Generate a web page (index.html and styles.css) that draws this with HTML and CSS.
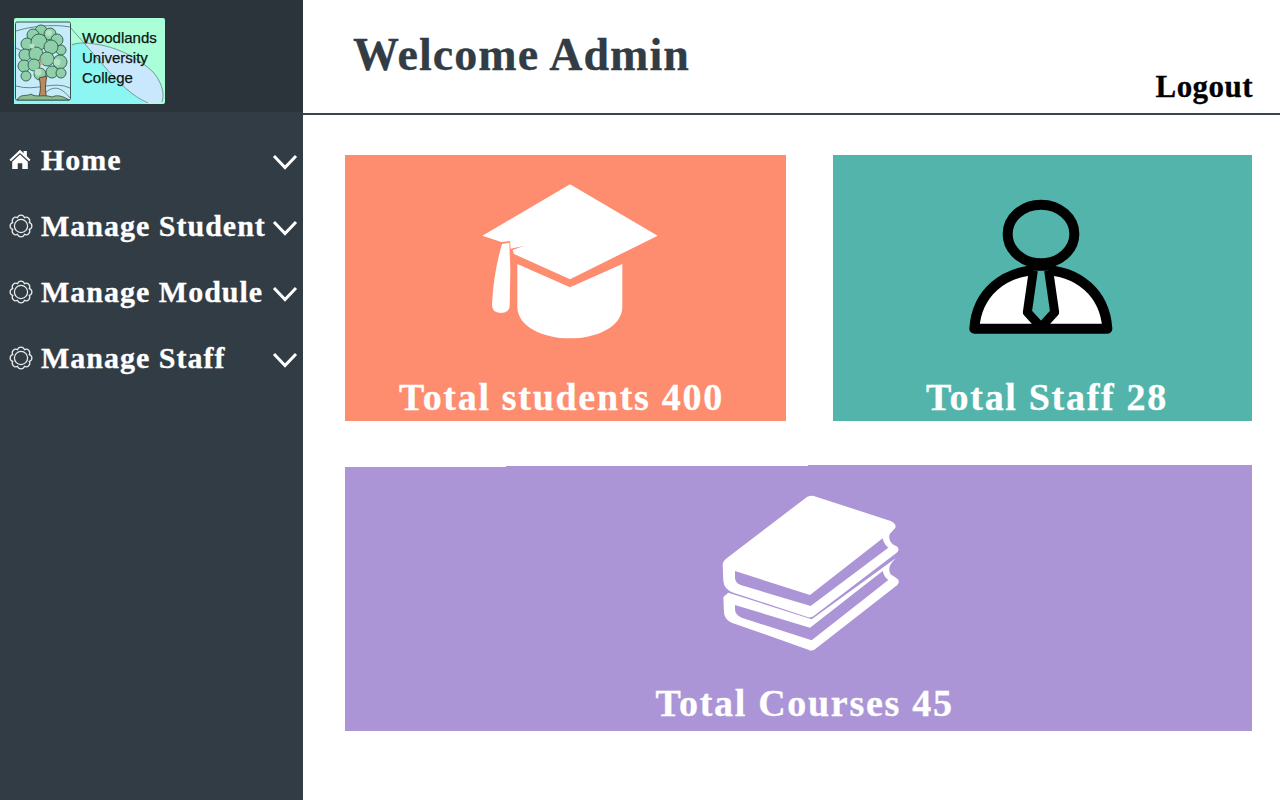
FILE: index.html
```html
<!DOCTYPE html>
<html lang="en">
<head>
<meta charset="utf-8">
<title>Woodlands University College</title>
<link rel="stylesheet" href="styles.css">
</head>
<body>
<svg class="defs" width="0" height="0" aria-hidden="true">
  <symbol id="gear" viewBox="2 2 20 20">
    <path d="M18.93 14.87A3 3 0 0 1 14.87 18.93A3 3 0 0 1 9.13 18.93A3 3 0 0 1 5.07 14.87A3 3 0 0 1 5.07 9.13A3 3 0 0 1 9.13 5.07A3 3 0 0 1 14.87 5.07A3 3 0 0 1 18.93 9.13A3 3 0 0 1 18.93 14.87Z" fill="none" stroke="currentColor" stroke-width="1.050"/>
    <circle cx="12" cy="12" r="5.500" fill="none" stroke="currentColor" stroke-width="1.050"/>
  </symbol>
  <symbol id="chev" viewBox="0 0 26 16">
    <polyline points="2,2 13,13.5 24,2" fill="none" stroke="currentColor" stroke-width="3"/>
  </symbol>
</svg>
<div class="app">
  <aside class="sidebar">
    <div class="brand">
      <svg class="logo" viewBox="0 0 151 86" role="img" aria-label="Woodlands University College">
        <rect x="0" y="0" width="151" height="86" rx="2" fill="#aaffd8"/>
        <path d="M0 25H70L105 65L132 86H0Z" fill="#8cf7f2"/>
        <path d="M70 25C100 26 125 40 140 55C150 68 150 78 148 84L134 85C118 78 105 65 90 48Z" fill="#c9e8fd"/>
        <path d="M56 9L70 25L90 48C105 65 118 78 134 85M58 27C62 25 66 25 70 25C100 26 125 40 140 55C150 68 150 78 148 84" fill="none" stroke="#5f8584" stroke-width=".8"/>
        <rect x="1.500" y="4" width="55" height="78" rx="1.500" fill="#c6ecfb" stroke="#35534f" stroke-width="1"/>
        <path d="M2 13C18 8 40 6 56 9M2 30C10 34 18 38 22 42M2 68C22 74 40 62 56 70M30 76C40 66 48 70 56 80" fill="none" stroke="#47706b" stroke-width=".8"/>
        <g fill="#8fcfaa" stroke="#2c5a4a" stroke-width=".9">
          <circle cx="27" cy="13" r="6"/><circle cx="19" cy="17" r="6"/><circle cx="36" cy="16" r="6"/>
          <circle cx="43" cy="22" r="6"/><circle cx="13" cy="26" r="6"/><circle cx="47" cy="32" r="5"/>
          <circle cx="25" cy="24" r="8"/><circle cx="37" cy="29" r="7"/><circle cx="11" cy="37" r="6"/>
          <circle cx="22" cy="36" r="7"/><circle cx="46" cy="44" r="7"/><circle cx="33" cy="41" r="7"/>
          <circle cx="10" cy="48" r="6"/><circle cx="20" cy="47" r="6"/><circle cx="12" cy="58" r="5"/>
          <circle cx="26" cy="56" r="6"/><circle cx="38" cy="54" r="6"/><circle cx="47" cy="55" r="5"/>
        </g>
        <g fill="#b5e3c6">
          <circle cx="35" cy="15" r="3"/><circle cx="18" cy="28" r="2.500"/><circle cx="43" cy="44" r="3.500"/><circle cx="24" cy="54" r="3.500"/>
        </g>
        <path d="M25 60C27 66 27 74 24 81H33C31 74 31 66 33 58Z" fill="#b98b5e" stroke="#3c3a2a" stroke-width=".8"/>
        <path d="M27 37L29 47L26 47Z" fill="#c6a57f"/>
        <path d="M3 82C7 75 12 79 17 76C22 80 30 76 38 79C44 76 50 79 55 82Z" fill="#8dbb92" stroke="#36493a" stroke-width=".8"/>
        <text class="logo-text" x="68" y="25">Woodlands</text>
        <text class="logo-text" x="68" y="45">University</text>
        <text class="logo-text" x="68" y="65">College</text>
      </svg>
    </div>
    <nav class="menu">
      <a class="menu-item">
        <svg class="ico ico-home" viewBox="0 0 24 24"><path d="M12 2L.5 12.700l1.600 1.800L12 5.500l9.900 9 1.600-1.800-4-3.700V3.200h-3.600v2.500Z" fill="currentColor"/><path d="M12 7.200L3.500 15v8h6v-6.500h5V23h6v-8Z" fill="currentColor"/></svg>
        <span class="label">Home</span>
        <svg class="chev"><use href="#chev"/></svg>
      </a>
      <a class="menu-item">
        <svg class="ico"><use href="#gear"/></svg>
        <span class="label">Manage Student</span>
        <svg class="chev"><use href="#chev"/></svg>
      </a>
      <a class="menu-item">
        <svg class="ico"><use href="#gear"/></svg>
        <span class="label">Manage Module</span>
        <svg class="chev"><use href="#chev"/></svg>
      </a>
      <a class="menu-item">
        <svg class="ico"><use href="#gear"/></svg>
        <span class="label">Manage Staff</span>
        <svg class="chev"><use href="#chev"/></svg>
      </a>
    </nav>
  </aside>
  <main class="main">
    <header class="topbar">
      <h1 class="welcome">Welcome Admin</h1>
      <a class="logout">Logout</a>
    </header>
    <section class="cards">
      <article class="card card-students">
        <svg class="art art-cap" viewBox="0 0 660 540">
          <path d="M330 43L593 197L330 328L162 252L158 240L190 228L152 236L150 213L124 216L67 197Z" fill="#fff"/>
          <path d="M126 222L148 218L151 300L149 408Q148 428 122 429Q96 428 96 405Q100 310 126 222Z" fill="#fff"/>
          <path d="M172 282L330 352L487 282V410C487 470 410 505 330 505C250 505 172 470 172 410Z" fill="#fff"/>
        </svg>
        <div class="card-title">Total students 400</div>
      </article>
      <article class="card card-staff">
        <svg class="art art-staff" viewBox="0 0 540 510">
          <path d="M73 446C80 340 160 270 273 270C386 270 465 340 472 446Z" fill="#fff" stroke="#000" stroke-width="30" stroke-linejoin="round"/>
          <ellipse cx="273" cy="162" rx="100" ry="88" fill="#52b4aa" stroke="#000" stroke-width="30"/>
          <path d="M250 272L232 397L273 442L314 397L296 272" fill="#52b4aa" stroke="#000" stroke-width="27" stroke-linejoin="round"/>
        </svg>
        <div class="card-title">Total Staff 28</div>
      </article>
      <article class="card card-courses">
        <svg class="art art-books" viewBox="0 0 660 540">
          <path d="M85 335L70 348L72 395Q74 415 95 425L325 506Q335 512 345 505L592 312Q602 300 590 292L572 280Q562 262 575 245L587 232L335 415Z" fill="#fff"/>
          <path d="M105 372L330 440L548 270Q552 288 565 297L335 478L125 410Q105 402 105 385Z" fill="#ac95d6"/>
          <path d="M322 47Q335 41 348 47L572 120Q592 130 585 142L570 158Q562 175 578 190L592 197Q600 207 590 215L345 402Q335 412 322 408L100 335Q72 325 70 300L68 250Q70 238 85 228Z" fill="#fff"/>
          <path d="M105 270L330 342L548 172Q552 190 565 200L332 375L122 312Q105 305 105 290Z" fill="#ac95d6"/>
        </svg>
        <div class="card-title">Total Courses 45</div>
      </article>
    </section>
  </main>
</div>
</body>
</html>
```
FILE: styles.css
```css
* { box-sizing: border-box; }
html, body { margin: 0; height: 100%; background: #fff; }
body { font-family: "Liberation Serif", "Times New Roman", serif; overflow: hidden; }
.defs { display: block; height: 0; }
.app { display: flex; height: 800px; }

.sidebar { width: 303px; flex: none; background: #323c44; color: #fff; }
.brand { height: 112px; background: #2b343a; padding: 18px 0 0 14px; }
.logo { display: block; width: 151px; height: 86px; }
.logo-text { font-family: "Liberation Sans", Arial, sans-serif; font-size: 15px; fill: #0c1512; stroke: #0c1512; stroke-width: .25px; }

.menu { display: flex; flex-direction: column; padding-top: 15px; }
.menu-item { display: flex; align-items: center; height: 66px; padding: 0 5px 0 9px; color: #fff; }
.ico { width: 24px; height: 24px; flex: none; margin-right: 8px; color: #e8ecee; }
.ico-home { width: 22px; height: 22px; margin: -3px 10px 0 0; color: #fff; }
.label { font-size: 30px; font-weight: 700; letter-spacing: 1px; white-space: nowrap; line-height: 36px; -webkit-text-stroke: .3px #fff; }
.chev { width: 26px; height: 16px; flex: none; margin-left: auto; margin-top: 4px; color: #fff; }

.main { flex: 1; min-width: 0; }
.topbar { height: 115px; border-bottom: 2px solid #38454d; display: flex; justify-content: space-between; padding: 0 27px 0 50px; }
.welcome { margin: 29px 0 0; font-size: 46px; line-height: 52px; font-weight: 700; color: #323c44; letter-spacing: 1.05px; -webkit-text-stroke: .3px #323c44; }
.logout { align-self: flex-end; margin-bottom: 7px; font-size: 31px; line-height: 38px; font-weight: 700; color: #000; letter-spacing: .45px; -webkit-text-stroke: .3px #000; }

.cards { display: grid; grid-template-columns: 441px 419px; grid-template-rows: 266px 266px; column-gap: 47px; row-gap: 44px; padding: 40px 0 0 42px; }
.card { display: flex; flex-direction: column; overflow: hidden; }
.card-students { background: #fe8c6e; }
.card-staff { background: #52b4aa; }
.card-courses {
  grid-column: 1 / 3;
  background:
    linear-gradient(#ac95d6, #ac95d6) 0 2px / 161px 100% no-repeat,
    linear-gradient(#ac95d6, #ac95d6) 161px 1px / 302px 100% no-repeat,
    linear-gradient(#ac95d6, #ac95d6) 463px 0 / 444px 100% no-repeat;
}
.card-title { font-size: 38px; line-height: 44px; font-weight: 700; color: #fff; letter-spacing: 1.7px; text-align: center; white-space: nowrap; -webkit-text-stroke: .3px #fff; }
.art { display: block; flex: none; }
.art-cap { width: 220px; height: 180px; margin: 15px 0 0 115px; }
.art-staff { width: 180px; height: 170px; margin: 25px 0 0 117px; }
.art-books { width: 220px; height: 180px; margin: 16px 0 0 355px; }
.card-students .card-title { margin: 25px 8px 0 0; }
.card-staff .card-title { margin: 25px 0 0 9px; }
.card-courses .card-title { margin: 20px 0 0 12px; }
```
